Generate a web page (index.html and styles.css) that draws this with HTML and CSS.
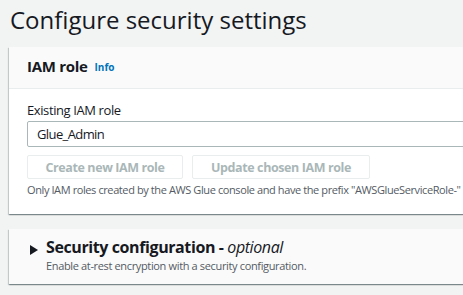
FILE: index.html
```html
<!DOCTYPE html>
<html>
<head>
<meta charset="utf-8">
<link rel="stylesheet" href="styles.css">
</head>
<body>
<div class="page">
  <h1 class="title">Configure security settings</h1>
  <section class="card">
    <div class="card-header">
      <h2 class="card-title">IAM role</h2>
      <span class="info">Info</span>
    </div>
    <div class="card-body">
      <label class="label">Existing IAM role</label>
      <div class="input">Glue_Admin</div>
      <div class="buttons">
        <button class="btn">Create new IAM role</button>
        <button class="btn">Update chosen IAM role</button>
      </div>
      <p class="help">Only IAM roles created by the AWS Glue console and have the prefix "AWSGlueServiceRole-"</p>
    </div>
  </section>
  <section class="card card-collapsed">
    <div class="expander">
      <svg class="caret" width="8" height="10" viewBox="0 0 8 10"><path d="M0 0 L8 5 L0 10 Z" fill="#16191f"/></svg>
      <div class="expander-text">
        <h2 class="expander-title">Security configuration - <em>optional</em></h2>
        <p class="expander-desc">Enable at-rest encryption with a security configuration.</p>
      </div>
    </div>
  </section>
</div>
</body>
</html>
```
FILE: styles.css
```css
* { box-sizing: border-box; }
html, body { margin: 0; padding: 0; }
body {
  background: #f2f3f3;
  font-family: "Open Sans", "Noto Sans", sans-serif;
  color: #16191f;
  overflow: hidden;
  width: 463px;
  height: 295px;
}
.page {
  width: 560px;
  padding: 0 0 0 9px;
}
.title {
  margin: 0;
  padding: 4px 0 0 1px;
  font-size: 24px;
  font-weight: 400;
  line-height: 32px;
  letter-spacing: 0;
}
.card {
  background: #fff;
  margin-top: 11px;
  box-shadow: 0 1px 1px 0 rgba(0,28,36,0.3), 1px 1px 1px 0 rgba(0,28,36,0.15), -1px 1px 1px 0 rgba(0,28,36,0.15);
}
.card-header {
  height: 42px;
  background: #fafafa;
  border-bottom: 1px solid #eaeded;
  display: flex;
  align-items: center;
  gap: 7px;
  padding: 0 18px;
}
.card-title {
  margin: 0 0 4px;
  font-size: 15px;
  font-weight: 700;
  letter-spacing: -0.3px;
}
.info {
  font-size: 10px;
  font-weight: 700;
  color: #0073bb;
  margin-bottom: 1px;
}
.card-body {
  padding: 12px 18px 16px;
}
.label {
  display: block;
  font-size: 13px;
  line-height: 18px;
  letter-spacing: -0.4px;
}
.input {
  margin-top: 2px;
  height: 26px;
  border: 1px solid #aab7b8;
  border-radius: 2px;
  padding: 0 9px;
  font-size: 13px;
  line-height: 24px;
  letter-spacing: -0.6px;
}
.buttons {
  display: flex;
  gap: 9px;
  margin-top: 8px;
}
.btn {
  height: 24px;
  background: #fff;
  border: 1px solid #eaeded;
  border-radius: 2px;
  font-family: inherit;
  font-size: 12.5px;
  font-weight: 700;
  color: #aab7b8;
  padding: 0 0;
  letter-spacing: -0.4px;
}
.btn:first-child { width: 156px; }
.btn:last-child { width: 178px; }
.help {
  margin: 3px 0 0;
  font-size: 11px;
  line-height: 16px;
  color: #545b64;
  white-space: nowrap;
  letter-spacing: -0.4px;
}
.card-collapsed {
  margin-top: 15px;
  background: #fafafa;
}
.expander {
  display: flex;
  align-items: flex-start;
  padding: 7px 18px 12px;
  height: 55px;
}
.caret {
  margin: 9px 8px 0 3px;
  flex: none;
}
.expander-title {
  margin: 0;
  font-size: 16px;
  font-weight: 700;
  line-height: 22px;
  letter-spacing: -0.4px;
}
.expander-title em {
  font-weight: 400;
}
.expander-desc {
  margin: 0;
  font-size: 11px;
  line-height: 16px;
  color: #545b64;
  letter-spacing: -0.35px;
}
```
